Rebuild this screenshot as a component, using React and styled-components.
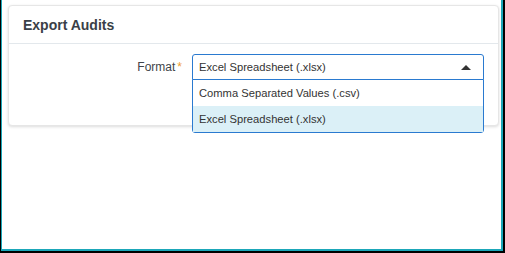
import styled, { createGlobalStyle } from "styled-components";

const GlobalStyle = createGlobalStyle`
  html, body {
    margin: 0;
    padding: 0;
    background: #000;
  }
  body {
    font-family: "Liberation Sans", Arial, sans-serif;
  }
`;

const Frame = styled.div`
  width: 505px;
  height: 253px;
  background: #000;
  box-sizing: border-box;
  padding-left: 1px;
`;

const Screen = styled.div`
  width: 502px;
  height: 251px;
  box-sizing: border-box;
  background: #fff;
  border-left: 1px solid #1ba7b9;
  border-right: 2px solid #1ba7b9;
  border-bottom: 2px solid #1ba7b9;
  padding: 5px 2px 0 6px;
`;

const Card = styled.div`
  background: #fff;
  border: 1px solid #e6e6e6;
  border-radius: 4px;
  box-shadow: 0 1px 3px rgba(0, 0, 0, 0.14);
`;

const CardHeader = styled.div`
  height: 37px;
  display: flex;
  align-items: center;
  padding: 0 14px;
  border-bottom: 1px solid #e3e8ec;
  font-size: 14px;
  font-weight: bold;
  color: #3a3f47;
`;

const CardBody = styled.div`
  padding: 10px 13px 45px 14px;
`;

const Row = styled.div`
  display: flex;
  align-items: center;
  gap: 10px;
`;

const Label = styled.label`
  width: 159px;
  text-align: right;
  font-size: 12px;
  color: #3f4449;
`;

const Required = styled.span`
  color: #f0a030;
  margin-left: 2px;
`;

const SelectWrap = styled.div`
  position: relative;
  width: 292px;
`;

const SelectBox = styled.div`
  height: 26px;
  box-sizing: border-box;
  border: 1px solid #2a7ad0;
  border-radius: 3px 3px 0 0;
  display: flex;
  align-items: center;
  justify-content: space-between;
  padding: 0 12px 0 6px;
  font-size: 11.2px;
  color: #333;
`;

const Caret = styled.span`
  width: 0;
  height: 0;
  border-left: 5px solid transparent;
  border-right: 5px solid transparent;
  border-bottom: 5px solid #333;
`;

const Menu = styled.ul`
  position: absolute;
  top: 25px;
  left: 0;
  right: 0;
  margin: 0;
  padding: 0;
  list-style: none;
  background: #fff;
  border: 1px solid #2a7ad0;
  border-radius: 0 0 3px 3px;
  z-index: 10;
`;

const Option = styled.li`
  height: 26px;
  display: flex;
  align-items: center;
  padding: 0 6px;
  font-size: 11.2px;
  color: #333;
  background: ${({ active }) => (active ? "#dbf0f7" : "#fff")};
`;

const options = ["Comma Separated Values (.csv)", "Excel Spreadsheet (.xlsx)"];

export default function App() {
  const selected = "Excel Spreadsheet (.xlsx)";
  return (
    <>
      <GlobalStyle />
      <Frame>
        <Screen>
          <Card>
            <CardHeader>Export Audits</CardHeader>
            <CardBody>
              <Row>
                <Label>
                  Format<Required>*</Required>
                </Label>
                <SelectWrap>
                  <SelectBox>
                    {selected}
                    <Caret />
                  </SelectBox>
                  <Menu>
                    {options.map((o) => (
                      <Option key={o} active={o === selected}>
                        {o}
                      </Option>
                    ))}
                  </Menu>
                </SelectWrap>
              </Row>
            </CardBody>
          </Card>
        </Screen>
      </Frame>
    </>
  );
}
